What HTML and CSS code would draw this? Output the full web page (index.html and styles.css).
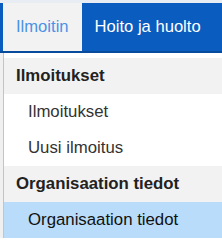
FILE: index.html
```html
<!DOCTYPE html>
<html lang="fi">
<head>
  <meta charset="UTF-8">
  <meta name="viewport" content="width=device-width, initial-scale=1.0">
  <title>Ilmoitin</title>
  <link rel="stylesheet" href="styles.css">
</head>
<body>
  <div class="topline"></div>
  <nav class="nav">
    <a class="nav-item active" href="#">Ilmoitin</a>
    <a class="nav-item" href="#">Hoito ja huolto</a>
  </nav>
  <div class="page">
    <div class="behind"></div>
    <ul class="menu">
      <li class="menu-header">Ilmoitukset</li>
      <li class="menu-item">Ilmoitukset</li>
      <li class="menu-item">Uusi ilmoitus</li>
      <li class="menu-header">Organisaation tiedot</li>
      <li class="menu-item selected">Organisaation tiedot</li>
    </ul>
  </div>
</body>
</html>
```
FILE: styles.css
```css
body {
  margin: 0;
  font-family: "Liberation Sans", Arial, sans-serif;
  background-color: #ffffff;
  overflow: hidden;
}
.topline {
  height: 3px;
  background-color: #e8edf3;
}
.nav {
  display: flex;
  height: 48px;
  padding-left: 3px;
  background-color: #0b5cbf;
  border-bottom: 2px solid #084a9c;
}
.nav-item {
  display: flex;
  align-items: center;
  padding: 0 13px;
  font-size: 16.6px;
  color: #ffffff;
  text-decoration: none;
  white-space: nowrap;
}
.nav-item.active {
  background-color: #f2f2f2;
  color: #4a93e6;
}
.page {
  display: flex;
}
.behind {
  width: 3px;
  background-color: #f0f0f0;
}
.menu {
  flex: 1;
  list-style: none;
  margin: 0;
  padding: 5px 0 0 0;
  border-left: 1px solid #c4c4c4;
  font-size: 16.8px;
}
.menu-header {
  height: 36px;
  line-height: 36px;
  padding-left: 12px;
  font-weight: bold;
  color: #222222;
  background-color: #f2f2f2;
}
.menu-item {
  height: 36px;
  line-height: 36px;
  padding-left: 24px;
  color: #333333;
  white-space: nowrap;
}
.menu-item.selected {
  background-color: #b8dcfa;
  color: #111111;
}
```
